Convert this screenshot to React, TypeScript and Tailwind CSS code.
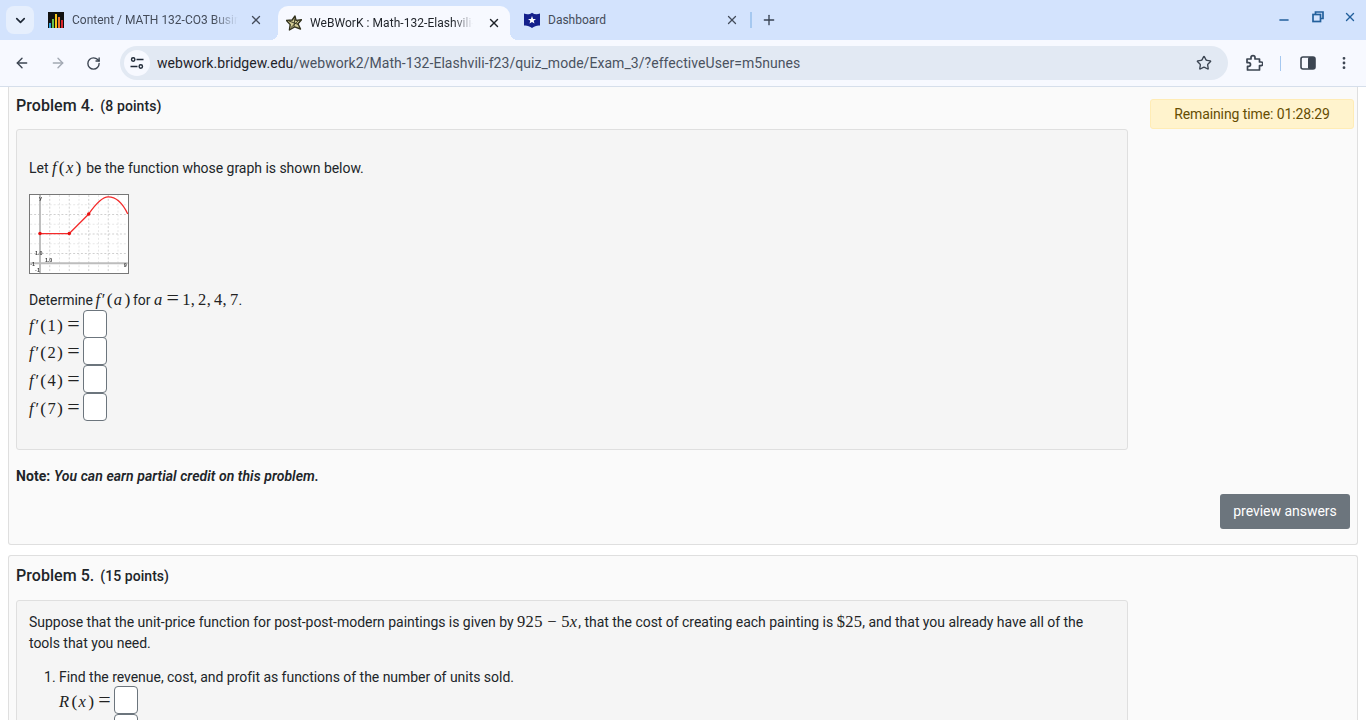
import { ArrowLeft, ArrowRight, ChevronDown, EllipsisVertical, Minus, Plus, RotateCw, Star, X } from "lucide-react";

const Var = ({ children }: { children: React.ReactNode }) => <i className="italic pr-[1px]">{children}</i>;

// parens and equals sign are wider in the math font than in Liberation Serif
const Par = ({ children }: { children: React.ReactNode }) => <span className="text-[17.5px] px-[1px]">{children}</span>;
const Eq = () => <span className="text-[22px] leading-none mx-[3px]">=</span>;
const Prime = () => <span className="ml-[0.5px]">′</span>;

const Mth = ({ children }: { children: React.ReactNode }) => (
  <span className="font-['Liberation_Serif',serif] text-[16.5px] leading-none tracking-[0.3px] text-[#222]">{children}</span>
);

const AnswerBox = () => <span className="block w-[24px] h-[28px] shrink-0 bg-white border border-[#6c757d] rounded-[4px]" />;

const answers = ["1", "2", "4", "7"];

const D2lIcon = () => (
  <svg width="16" height="16" viewBox="0 0 16 16" className="shrink-0">
    <rect width="16" height="16" fill="#111" />
    <rect x="1" y="11" width="2" height="5" fill="#2b9fe0" />
    <rect x="4" y="7" width="2" height="9" fill="#6cc04a" />
    <rect x="7" y="2" width="2" height="14" fill="#f5c518" />
    <rect x="10" y="5" width="2" height="11" fill="#f0762b" />
    <rect x="13" y="8" width="2" height="8" fill="#d8262c" />
  </svg>
);

const WebworkIcon = () => (
  <svg width="16" height="16" viewBox="0 0 16 16" className="shrink-0">
    <path d="M9 1 L10 5.4 L15.5 4.8 L12 8.8 L14.5 14 L8.6 11.8 L3.4 15 L4.2 9.6 L0.5 5.4 L6.2 5 Z" fill="#d2cc94" stroke="#33331f" strokeWidth="1.4" strokeLinejoin="round" />
    <path d="M8.8 3.5 L8 11.5 M3 6 L12.5 9.5 M12.5 5.5 L5 12.5" stroke="#33331f" strokeWidth="0.9" />
  </svg>
);

const ShieldIcon = () => (
  <svg width="16" height="16" viewBox="0 0 16 16" className="shrink-0">
    <path d="M0 1.5 C3 2.8 5.5 2.5 8 0.8 C10.5 2.5 13 2.8 16 1.5 V13.5 C13 13.2 10.5 14 8 16 C5.5 14 3 13.2 0 13.5 Z" fill="#14208c" />
    <path d="M8 4 L9.1 6.9 L12 7 L9.7 8.8 L10.5 11.6 L8 10 L5.5 11.6 L6.3 8.8 L4 7 L6.9 6.9 Z" fill="#fff" />
  </svg>
);

const TuneIcon = () => (
  <svg width="16" height="16" viewBox="0 0 16 16" fill="none" stroke="#1f2937" strokeWidth="1.4">
    <circle cx="4.2" cy="4.5" r="1.7" />
    <path d="M7.5 4.5 H14.5 M1.5 11.5 H8.5" />
    <circle cx="11.8" cy="11.5" r="1.7" />
  </svg>
);

const PuzzleIcon = () => (
  <svg width="18" height="18" viewBox="0 0 18 18" fill="none" stroke="#3c4552" strokeWidth="1.7" strokeLinejoin="round">
    <path d="M2 5 H6 V3.6 A2 2 0 0 1 10 3.6 V5 H14.5 V8 H16 A1.6 1.6 0 0 1 16 11.6 H14.5 V16 H2.5 V12.4 H3.6 A1.9 1.9 0 0 0 3.6 8.6 H2 Z" />
  </svg>
);

const SidePanelIcon = () => (
  <svg width="16" height="16" viewBox="0 0 16 16">
    <rect x="1" y="2" width="14" height="12" rx="2" fill="none" stroke="#3c4552" strokeWidth="1.6" />
    <rect x="8" y="2" width="7" height="12" rx="1.5" fill="#3c4552" />
  </svg>
);

const RestoreIcon = () => (
  <svg width="12" height="12" viewBox="0 0 12 12" fill="none" stroke="#23609c" strokeWidth="1.7">
    <path d="M3.5 3 V1 H11 V7.5 H8.5" />
    <rect x="1" y="3.5" width="7.5" height="7" />
  </svg>
);

const FunctionGraph = () => {
  const lines = [10, 20, 30, 40, 50, 60, 70, 80, 90];
  return (
    <svg width="100" height="80" viewBox="0 0 100 80" className="block bg-white border border-[#777] box-border">
      <g className="blur-[0.4px]">
        {lines.map((v) => (
          <line key={`v${v}`} x1={v} x2={v} y1="0" y2="80" stroke={v % 20 === 0 ? "#cfcfcf" : "#e6e6e6"} strokeDasharray="2 2" strokeWidth="1" />
        ))}
        {[10, 20, 30, 40, 50, 60].map((v) => (
          <line key={`h${v}`} x1="0" x2="100" y1={v} y2={v} stroke={v % 20 === 0 ? "#cfcfcf" : "#e6e6e6"} strokeDasharray="2 2" strokeWidth="1" />
        ))}
        <line x1="10" x2="10" y1="0" y2="80" stroke="#bdbdbd" strokeWidth="2" />
        <line x1="0" x2="100" y1="70" y2="70" stroke="#bdbdbd" strokeWidth="2" />
        <path d="M10 39.5 H40 L60 19.5 C68 8 74 2 80 2 C88 2 95 9 100 19.5" fill="none" stroke="#f42a2a" strokeWidth="1.3" />
        <circle cx="10" cy="39.5" r="1.8" fill="#e81010" />
        <circle cx="40" cy="39.5" r="1.8" fill="#e81010" />
        <circle cx="60" cy="19.5" r="1.8" fill="#e81010" />
        <g fontFamily="'Liberation Sans', sans-serif" fontSize="5.5" fontWeight="bold" fill="#444">
          <text x="5" y="62">1.0</text>
          <text x="15" y="69">1.0</text>
          <text x="0" y="73">-1</text>
          <text x="5" y="79">-1</text>
          <text x="96" y="74">9</text>
          <text x="9" y="5">y</text>
        </g>
      </g>
    </svg>
  );
};

const App = () => {
  return (
    <div className="h-[720px] w-[1366px] overflow-hidden flex flex-col bg-white font-['Roboto',sans-serif] text-[#212529]">
      {/* tab strip */}
      <div className="h-[40px] shrink-0 flex bg-[#d3e3fd] pl-[6px] relative">
        <div className="w-[28px] h-[28px] mt-[6px] rounded-[8px] bg-[#e6effd] flex items-center justify-center">
          <ChevronDown size={15} strokeWidth={2.6} className="text-[#1f2937]" />
        </div>
        <div className="w-[244px] flex items-center pl-[14px] pr-[15px] text-[12px] text-[#444c5a]">
          <D2lIcon />
          <span className="ml-[8px] flex-1 whitespace-nowrap overflow-hidden [mask-image:linear-gradient(to_right,black_85%,transparent)]">Content / MATH 132-CO3 Business</span>
          <X size={14} strokeWidth={2.2} className="ml-[11px] shrink-0 text-[#444c5a]" />
        </div>
        <div className="relative w-[232px] mt-[6px] h-[34px] rounded-t-[10px] bg-[#f7f9ff] flex items-center pl-[8px] pr-[9px] text-[12px] text-[#1f2329]">
          <span className="absolute -left-[8px] bottom-0 w-[8px] h-[8px] bg-[radial-gradient(circle_at_0_0,transparent_8px,#f7f9ff_8px)]" />
          <span className="absolute -right-[8px] bottom-0 w-[8px] h-[8px] bg-[radial-gradient(circle_at_100%_0,transparent_8px,#f7f9ff_8px)]" />
          <WebworkIcon />
          <span className="ml-[8px] flex-1 whitespace-nowrap overflow-hidden tracking-[0.05px] [mask-image:linear-gradient(to_right,black_88%,transparent)]">WeBWorK : Math-132-Elashvili-f23</span>
          <X size={14} strokeWidth={2.4} className="ml-[14px] shrink-0 text-[#1f2329]" />
        </div>
        <div className="w-[240px] flex items-center pl-[14px] pr-[11px] text-[12px] text-[#444c5a]">
          <ShieldIcon />
          <span className="ml-[8px] flex-1 whitespace-nowrap">Dashboard</span>
          <X size={14} strokeWidth={2.2} className="shrink-0 text-[#444c5a]" />
        </div>
        <div className="w-[2px] h-[16px] mt-[12px] bg-[#a5c8f0]" />
        <div className="ml-[9px] mt-[12px] h-[16px] flex items-center">
          <Plus size={16} strokeWidth={2} className="text-[#374151]" />
        </div>
        <div className="ml-auto flex items-start text-[#23609c]">
          <Minus size={14} strokeWidth={2.4} className="mt-[13px] mr-[21px]" />
          <span className="mt-[11px] mr-[19px]"><RestoreIcon /></span>
          <X size={14} strokeWidth={2.4} className="mt-[10px] mr-[9px]" />
        </div>
      </div>

      {/* toolbar */}
      <div className="h-[47px] shrink-0 flex items-center bg-[#f7f9ff] border-b border-[#d6dfeb] text-[#3c4552]">
        <ArrowLeft size={16} strokeWidth={2.1} className="ml-[14px] text-[#3c4552]" />
        <ArrowRight size={16} strokeWidth={2.1} className="ml-[20px] text-[#a3a9b3]" />
        <RotateCw size={15} strokeWidth={2.2} className="ml-[20px]" />
        <div className="ml-[19px] w-[1108px] h-[34px] rounded-full bg-[#e2e9f3] flex items-center pl-[4px] pr-[16px]">
          <span className="w-[26px] h-[26px] rounded-full bg-[#f7f9ff] flex items-center justify-center">
            <TuneIcon />
          </span>
          <span className="ml-[7px] text-[14px] text-[#4a5260] tracking-[0.05px] whitespace-nowrap">
            <span className="text-[#1f2329]">webwork.bridgew.edu</span>/webwork2/Math-132-Elashvili-f23/quiz_mode/Exam_3/?effectiveUser=m5nunes
          </span>
          <Star size={16} strokeWidth={2} className="ml-auto text-[#3c4552]" />
        </div>
        <span className="ml-[17px]"><PuzzleIcon /></span>
        <div className="ml-[17px] w-[1px] h-[15px] bg-[#a5c8f0]" />
        <span className="ml-[19px]"><SidePanelIcon /></span>
        <EllipsisVertical size={16} strokeWidth={2.2} className="ml-[20px]" />
      </div>

      {/* page */}
      <div className="flex-1 overflow-hidden bg-white px-[8px] text-[14px] leading-[21px] tracking-[-0.03px]">
        <div className="h-[458px] bg-[#fafafa] border border-t-0 border-[#dfdfdf] rounded-b-[3px] px-[7px] flex flex-col">
          <div className="flex h-[42px] shrink-0">
            <div className="w-[1112px] shrink-0 pt-[8px] flex items-baseline font-medium">
              <span className="text-[16px] leading-[21px] tracking-[0.05px]">Problem 4.</span>
              <span className="ml-[6px] text-[14px] tracking-[0.1px]">(8 points)</span>
            </div>
            <div className="ml-[22px] -mr-[4px] mt-[12px] w-[204px] h-[30px] shrink-0 bg-[#fff3cd] border border-[#ffecb5] rounded-[3px] flex items-center justify-center text-[#664d03] tracking-[-0.1px]">
              Remaining time: 01:28:29
            </div>
          </div>

          <div className="w-[1112px] h-[321px] shrink-0 bg-[#f5f5f5] border border-[#dfdfdf] rounded-[3px] pl-[12px] pt-[28px]">
            <p>
              Let <Mth><Var>f</Var><Par>(</Par><Var>x</Var><Par>)</Par></Mth> be the function whose graph is shown below.
            </p>
            <div className="mt-[15px]">
              <FunctionGraph />
            </div>
            <p className="mt-[13px]">
              Determine <span className="-ml-[1px] -mr-[2px]"><Mth><Var>f</Var><Prime /><Par>(</Par><Var>a</Var><Par>)</Par></Mth></span> for <Mth><Var>a</Var><Eq /><span className="[word-spacing:-1.5px]">1, 2, 4, 7</span></Mth>.
            </p>
            <div className="flex flex-col -mt-[1px]">
              {answers.map((n) => (
                <div key={n} className="flex items-center h-[27.6px] w-max">
                  <Mth><Var>f</Var><Prime /><Par>(</Par>{n}<Par>)</Par><Eq /></Mth>
                  <AnswerBox />
                </div>
              ))}
            </div>
          </div>

          <p className="mt-[16px] font-medium tracking-[0.06px]">
            <span className="font-bold">Note:</span> <span className="italic font-semibold">You can earn partial credit on this problem.</span>
          </p>
          <div className="flex justify-end mt-[7px]">
            <button type="button" className="w-[130px] h-[35px] bg-[#6c757d] text-white rounded-[3px] text-[14px]">preview answers</button>
          </div>
        </div>

        <div className="mt-[10px] bg-[#fafafa] border border-b-0 border-[#dfdfdf] rounded-t-[3px] px-[7px] h-[300px]">
          <div className="pt-[9px] h-[44px] flex items-baseline font-medium">
            <span className="text-[16px] leading-[21px] tracking-[0.05px]">Problem 5.</span>
            <span className="ml-[6px] text-[14px] tracking-[0.05px]">(15 points)</span>
          </div>
          <div className="w-[1112px] h-[200px] bg-[#f5f5f5] border border-[#dfdfdf] rounded-[3px] pl-[12px] pr-[12px] pt-[11px]">
            <p>
              Suppose that the unit-price function for post-post-modern paintings is given by <Mth>925 − 5<Var>x</Var></Mth>, that the cost of creating each painting is <Mth>$25</Mth>, and that you already have all of the tools that you need.
            </p>
            <ol className="mt-[13px] list-decimal pl-[30px]">
              <li>
                Find the revenue, cost, and profit as functions of the number of units sold.
                <div className="flex items-center h-[28px] w-max -mt-[2px]">
                  <Mth><Var>R</Var><Par>(</Par><Var>x</Var><Par>)</Par><Eq /></Mth>
                  <AnswerBox />
                </div>
                <div className="ml-[55px]"><AnswerBox /></div>
              </li>
            </ol>
          </div>
        </div>
      </div>
    </div>
  );
};

export default App;
